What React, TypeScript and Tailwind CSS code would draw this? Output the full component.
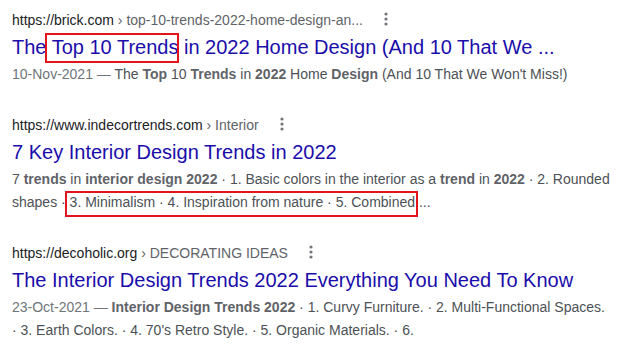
import React from "react"

type Result = {
  site: string
  crumb: string
  title: React.ReactNode
  snippet: React.ReactNode
}

function Dots() {
  return (
    <svg className="ml-[21px] inline-block align-[-1px]" width="4" height="14" viewBox="0 0 4 14">
      <circle cx="2" cy="2" r="1.6" fill="#70757a" />
      <circle cx="2" cy="7" r="1.6" fill="#70757a" />
      <circle cx="2" cy="12" r="1.6" fill="#70757a" />
    </svg>
  )
}

function Marked({ children, big }: { children: React.ReactNode; big?: boolean }) {
  const box = big
    ? "absolute -left-[7px] -right-[1px] -top-[3px] -bottom-[5px] border-2 border-[#e3151c]"
    : "absolute -left-[5px] -right-[3px] -top-[3px] -bottom-[7px] border-2 border-[#e3151c]"
  return (
    <span className="relative">
      {children}
      <span className={box} />
    </span>
  )
}

const B = ({ children }: { children: React.ReactNode }) => <b className="font-bold text-[#5f6368]">{children}</b>

const results: Result[] = [
  {
    site: "https://brick.com",
    crumb: "top-10-trends-2022-home-design-an...",
    title: (
      <>
        The <Marked big>Top 10 Trends</Marked> in 2022 Home Design (And 10 That We ...
      </>
    ),
    snippet: (
      <>
        <span className="text-[#70757a]">10-Nov-2021 — </span>The <B>Top</B> 10 <B>Trends</B> in <B>2022</B> Home{" "}
        <B>Design</B> (And 10 That We Won't Miss!)
      </>
    ),
  },
  {
    site: "https://www.indecortrends.com",
    crumb: "Interior",
    title: "7 Key Interior Design Trends in 2022",
    snippet: (
      <>
        7 <B>trends</B> in <B>interior design 2022</B> · 1. Basic colors in the interior as a <B>trend</B> in <B>2022</B> · 2.
        Rounded
        <br />
        shapes · <Marked>3. Minimalism · 4. Inspiration from nature · 5. Combined</Marked> ...
      </>
    ),
  },
  {
    site: "https://decoholic.org",
    crumb: "DECORATING IDEAS",
    title: "The Interior Design Trends 2022 Everything You Need To Know",
    snippet: (
      <>
        <span className="text-[#70757a]">23-Oct-2021 — </span>
        <B>Interior Design Trends 2022</B> · 1. Curvy Furniture. · 2. Multi-Functional Spaces.
        <br />· 3. Earth Colors. · 4. 70's Retro Style. · 5. Organic Materials. · 6.
      </>
    ),
  },
]

function ResultView({ r }: { r: Result }) {
  return (
    <div className="flex flex-col">
      <div className="h-[20px] text-[14px] leading-[20px] whitespace-nowrap">
        <span className="text-[#202124]">{r.site}</span>
        <span className="text-[#5f6368]"> › {r.crumb}</span>
        <Dots />
      </div>
      <div className="mt-[4px] text-[20px] leading-[26px] text-[#1a0dab] whitespace-nowrap">{r.title}</div>
      <div className="mt-[3px] text-[14px] leading-[23px] text-[#4d5156] whitespace-nowrap">{r.snippet}</div>
    </div>
  )
}

export default function App() {
  return (
    <div className="h-[351px] w-[642px] overflow-hidden bg-white px-[12px] pt-[10px] font-['Liberation_Sans',Arial,sans-serif]">
      <div className="flex flex-col gap-[29px]">
        {results.map((r) => (
          <ResultView key={r.site} r={r} />
        ))}
      </div>
    </div>
  )
}
